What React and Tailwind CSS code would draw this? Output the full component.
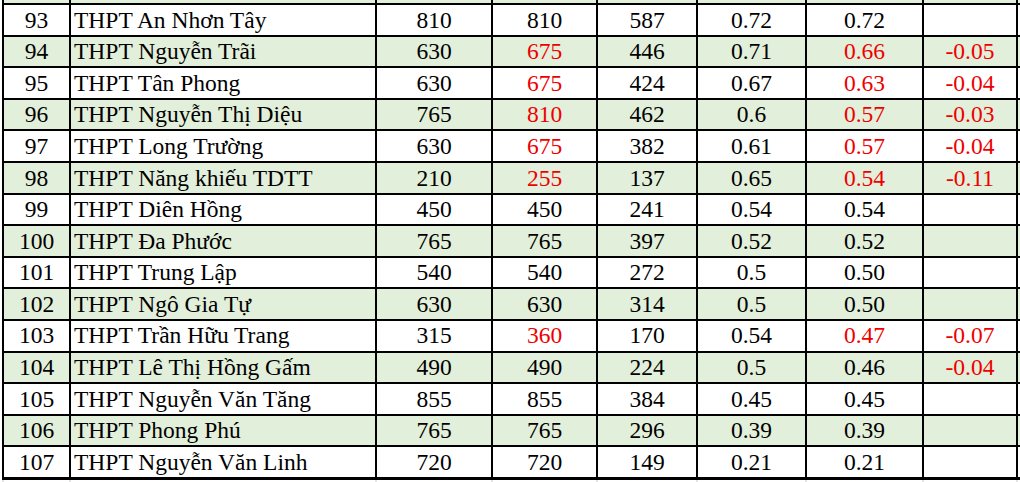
import React from 'react';

const rows = [
  ['93', 'THPT An Nhơn Tây', '810', '810', '587', '0.72', '0.72', ''],
  ['94', 'THPT Nguyễn Trãi', '630', '675', '446', '0.71', '0.66', '-0.05', [3, 6, 7]],
  ['95', 'THPT Tân Phong', '630', '675', '424', '0.67', '0.63', '-0.04', [3, 6, 7]],
  ['96', 'THPT Nguyễn Thị Diệu', '765', '810', '462', '0.6', '0.57', '-0.03', [3, 6, 7]],
  ['97', 'THPT Long Trường', '630', '675', '382', '0.61', '0.57', '-0.04', [3, 6, 7]],
  ['98', 'THPT Năng khiếu TDTT', '210', '255', '137', '0.65', '0.54', '-0.11', [3, 6, 7]],
  ['99', 'THPT Diên Hồng', '450', '450', '241', '0.54', '0.54', ''],
  ['100', 'THPT Đa Phước', '765', '765', '397', '0.52', '0.52', ''],
  ['101', 'THPT Trung Lập', '540', '540', '272', '0.5', '0.50', ''],
  ['102', 'THPT Ngô Gia Tự', '630', '630', '314', '0.5', '0.50', ''],
  ['103', 'THPT Trần Hữu Trang', '315', '360', '170', '0.54', '0.47', '-0.07', [3, 6, 7]],
  ['104', 'THPT Lê Thị Hồng Gấm', '490', '490', '224', '0.5', '0.46', '-0.04', [7]],
  ['105', 'THPT Nguyễn Văn Tăng', '855', '855', '384', '0.45', '0.45', ''],
  ['106', 'THPT Phong Phú', '765', '765', '296', '0.39', '0.39', ''],
  ['107', 'THPT Nguyễn Văn Linh', '720', '720', '149', '0.21', '0.21', ''],
];

const cols = 'grid-cols-[65px_304px_114px_103px_98px_107px_115px_92px_20px]';

const App = () => {
  return (
    <div className="w-[1020px] h-[482px] overflow-hidden bg-white text-black font-['Liberation_Serif',_'Times_New_Roman',_serif]">
      <div className="ml-[2px] pl-[2px] bg-black w-[1040px]">
        {/* partial row above */}
        <div className={`grid ${cols} gap-x-[2px] h-[3px]`}>
          {Array.from({ length: 9 }).map((_, i) => (
            <div key={i} className="bg-[#e2efda]" />
          ))}
        </div>
        <div className={`grid ${cols} gap-x-[2px] gap-y-[2px] py-[2px]`}>
          {rows.map((r, ri) => {
            const bg = ri % 2 === 1 ? 'bg-[#e2efda]' : 'bg-white';
            const redCols = r[8] || [];
            return (
              <React.Fragment key={r[0]}>
                {r.slice(0, 8).map((v, ci) => (
                  <div
                    key={ci}
                    className={`${bg} h-[29.6px] flex items-center text-[23.5px] leading-none ${
                      ci === 1 ? 'justify-start pl-[3px]' : 'justify-center'
                    } ${redCols.includes(ci) ? 'text-[#ee0000]' : ''}`}
                  >
                    <span className="whitespace-nowrap pt-[1px]">{v}</span>
                  </div>
                ))}
                <div className={`${bg} h-[29.6px]`} />
              </React.Fragment>
            );
          })}
        </div>
      </div>
      {/* faint sheet lines below */}
      <div className={`grid ${cols} gap-x-[2px] ml-[2px] pl-[2px] h-[3px] border-t border-black bg-[#e4e4e4]`}>
        {Array.from({ length: 9 }).map((_, i) => (
          <div key={i} className="bg-white" />
        ))}
      </div>
    </div>
  );
};

export default App;
